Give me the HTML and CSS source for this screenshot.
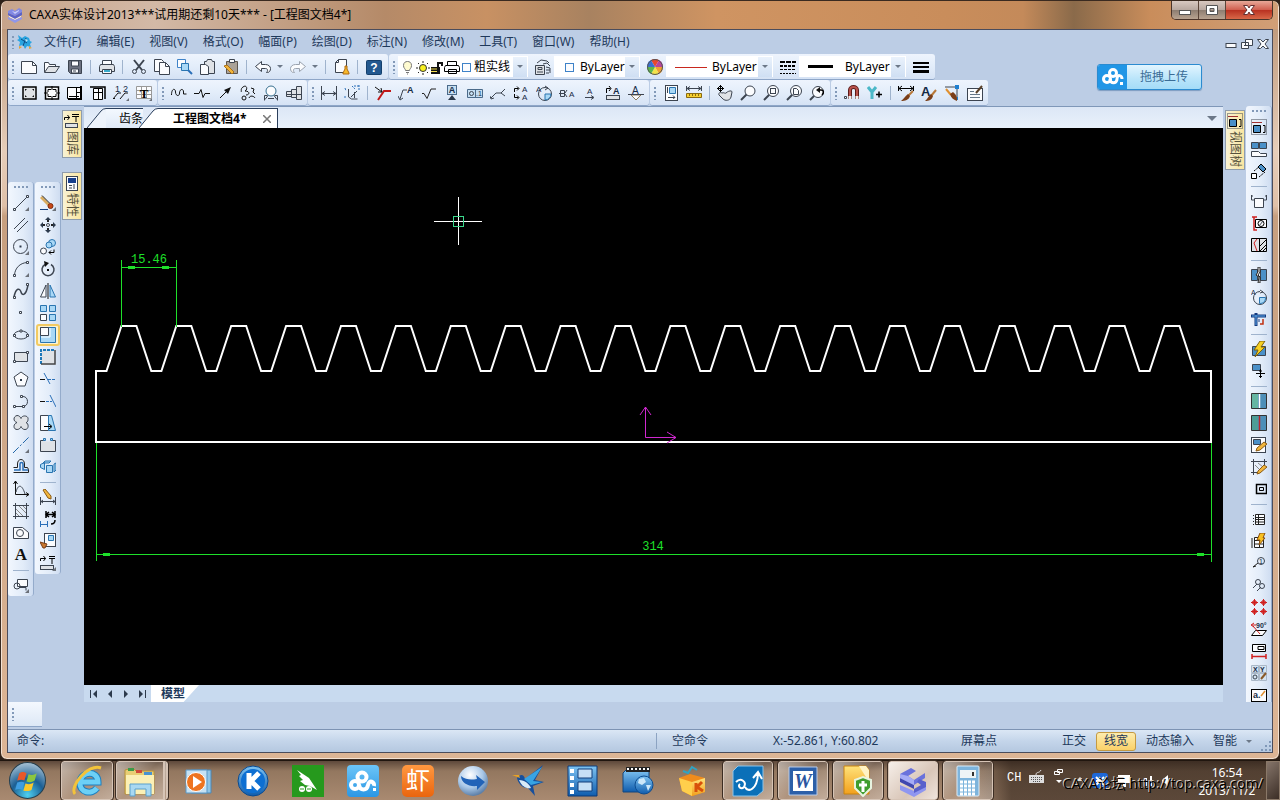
FILE: index.html
```html
<!DOCTYPE html>
<html lang="zh-CN">
<head>
    <meta charset="UTF-8">
    <meta name="viewport" content="width=device-width, initial-scale=1.0">
    <title>CAXA实体设计2013</title>
    <link rel="stylesheet" href="styles.css">
</head>
<body>

<!-- Shared gradients for the taskbar icons -->
<svg class="defs" aria-hidden="true">
    <defs>
        <linearGradient id="gBlue" x1="0" y1="0" x2="0" y2="1"><stop offset="0" stop-color="#7fc4f2"/><stop offset="1" stop-color="#0f5cad"/></linearGradient>
        <linearGradient id="gSky" x1="0" y1="0" x2="0" y2="1"><stop offset="0" stop-color="#6cc5f8"/><stop offset="1" stop-color="#2b97e4"/></linearGradient>
        <linearGradient id="gYellow" x1="0" y1="0" x2="0" y2="1"><stop offset="0" stop-color="#ffe27a"/><stop offset="1" stop-color="#f2a01c"/></linearGradient>
        <radialGradient id="gOrb" cx=".5" cy=".9" r=".9"><stop offset="0" stop-color="#4fd0f0"/><stop offset=".5" stop-color="#1b5f94"/><stop offset="1" stop-color="#a9c3d6"/></radialGradient>
        <radialGradient id="gPearl" cx=".4" cy=".3" r=".7"><stop offset="0" stop-color="#ffffff"/><stop offset=".6" stop-color="#a9c8e8"/><stop offset="1" stop-color="#5d7fa8"/></radialGradient>
    </defs>
</svg>

<div class="window">
    <header class="titlebar">
        <svg class="app-icon" viewBox="0 0 16 16"><path fill="#8289e4" d="M1 4l4-2 3 2 4-3 3 2v2L8 9 1 6z"/><path fill="#c9ccf8" d="M5 4l3 1 4-2v1L8 7z"/><path fill="#5a62c8" d="M1 6l7 3 7-4v3l-7 4-7-4z"/><path fill="#f1f1fc" d="M2 9l6 3 6-3v1l-6 3-6-3z"/><path fill="#8f96ea" d="M1 10l7 3 7-3v2l-7 4-7-4z"/></svg>
        <h1>CAXA实体设计2013***试用期还剩10天*** - [工程图文档4*]</h1>
        <div class="win-buttons">
            <button class="win-min" aria-label="最小化"><svg viewBox="0 0 14 12"><rect x="1.5" y="6.5" width="11" height="4" fill="#fff" stroke="#555"/></svg></button>
            <button class="win-max" aria-label="最大化"><svg viewBox="0 0 14 12"><path fill="#fff" stroke="#555" fill-rule="evenodd" d="M1.500 1.500h11v9h-11zM5 4.500v3h4v-3z"/></svg></button>
            <button class="win-close" aria-label="关闭"><svg viewBox="0 0 14 12"><path fill="#fff" stroke="#643030" d="M1.500 1.500h4L7 4l1.500-2.500h4L9 6l3.500 4.500h-4L7 8l-1.500 2.500h-4L5 6z"/></svg></button>
        </div>
    </header>

    <div class="client">
        <nav class="menubar">
            <span class="grip"></span>
            <svg class="menu-icon" viewBox="0 0 16 16"><path fill="#2aa4e0" d="M1 1l4 3 3-2 4 2 1 3 2 1-2 2 1 3-4-1-2 3-2-4-4 1 1-4-3-2 2-1z"/><path stroke="#0d4a82" fill="none" d="M4 5l6 4M9 4l-3 8"/><path fill="#bfe9f8" d="M8 5l3 1-2 2z"/><path fill="#e8a33a" d="M12 12l3 2-3 1zM2 12l3 1-3 2z"/></svg>
            <a href="#">文件(F)</a>
            <a href="#">编辑(E)</a>
            <a href="#">视图(V)</a>
            <a href="#">格式(O)</a>
            <a href="#">幅面(P)</a>
            <a href="#">绘图(D)</a>
            <a href="#">标注(N)</a>
            <a href="#">修改(M)</a>
            <a href="#">工具(T)</a>
            <a href="#">窗口(W)</a>
            <a href="#">帮助(H)</a>
            <div class="mdi-buttons">
                <button aria-label="最小化文档"><svg viewBox="0 0 12 12"><rect class="w" x="1" y="5.500" width="10" height="4"/></svg></button>
                <button aria-label="还原文档"><svg viewBox="0 0 12 12"><path class="w" d="M4.500 1.500h7v6h-7zM.5 4.500h7v6h-7z"/><path d="M3 7.500h2"/></svg></button>
                <button aria-label="关闭文档"><svg viewBox="0 0 12 12"><path class="w" d="M.5 1.500h3L6 4l2.500-2.500h3L8 6l3.500 4.500h-3L6 8l-2.500 2.500h-3L4 6z"/></svg></button>
            </div>
        </nav>

        <div class="toolrow">
            <div class="toolbar">
                <span class="grip"></span>
                <button title="新建"><svg viewBox="0 0 16 16"><path class="w" d="M.5 2.500h11l4 4v8H.5z"/><path d="M11.500 2.500v4h4"/></svg></button>
                <button title="打开"><svg viewBox="0 0 16 16"><path class="w" d="M.5 13V3.500h4l1 2h6v2"/><path class="g" d="M.5 13.500l4-6h11l-4 6z"/></svg></button>
                <button title="保存"><svg viewBox="0 0 16 16"><path fill="#6d7280" d="M1.500 1.500h13v13h-11l-2-2z"/><path class="w" d="M4.500 2h7v5h-7zM4.500 10h7v4h-7z"/><path d="M6 12h3"/></svg></button>
                <span class="sep"></span>
                <button title="打印"><svg viewBox="0 0 16 16"><path class="w" d="M3.500 1.500h9v4h-9z"/><path class="g" d="M1.500 5.500h13l1 2v5H.5v-5z"/><path class="w" d="M3.500 10.500h9v4h-9z"/><path stroke="#38a9c9" stroke-width="2" d="M5 12h6"/></svg></button>
                <span class="sep"></span>
                <button title="剪切"><svg viewBox="0 0 16 16"><path stroke-width="2" d="M3 1l8 10M13 1L5 11"/><circle cx="3.500" cy="12.500" r="2"/><circle cx="12.500" cy="12.500" r="2"/></svg></button>
                <button title="复制"><svg viewBox="0 0 16 16"><path class="w" d="M.5.500h7l2 2v10h-9z"/><path class="w" d="M5.500 3.500h6l4 4v8h-10z"/><path d="M11.500 3.500v4h4"/></svg></button>
                <button title="带基点复制"><svg viewBox="0 0 16 16"><path class="w blue" d="M.5.500h8v8h-8z"/><path class="b" d="M4.500 4.500h7v7h-7z"/><path class="u" stroke-width="2" d="M11 11l4 4"/></svg></button>
                <button title="粘贴"><svg viewBox="0 0 16 16"><path class="g" d="M4.500 2.500h2l1-2h4l1 2h2v12h-10z"/><path class="w" d="M.5 5.500h5l3 2v8h-8z"/></svg></button>
                <button title="选择性粘贴"><svg viewBox="0 0 16 16"><path fill="#aaa298" stroke="#5c5650" d="M3.500 2.500h11v12h-11z"/><path class="w" d="M6.500.500h5v3h-5z"/><path fill="#f2b53a" stroke="#a8701a" d="M1 7l3-1 7 7-2 2z"/></svg></button>
                <span class="sep"></span>
                <button title="撤销"><svg viewBox="0 0 16 16"><path class="w" d="M.5 7.500l6-5v3h4c3 0 5 2 5 4s-1 4-3 4h-1c2-2 1-4-1-4h-4v3z"/></svg></button>
                <button class="drop" aria-label="撤销列表"></button>
                <button title="重做"><svg viewBox="0 0 16 16" class="dim"><path class="w" d="M15.500 7.500l-6-5v3h-4c-3 0-5 2-5 4s1 4 3 4h1c-2-2-1-4 1-4h4v3z"/></svg></button>
                <button class="drop" aria-label="重做列表"></button>
                <span class="sep"></span>
                <button title="清理"><svg viewBox="0 0 16 16"><path class="w" d="M4.500.500h8v13h-11v-10z"/><path d="M4.500.500v3h-3"/><path fill="#f7b92c" stroke="#b06a10" d="M11 7h2v3l2 4v1H9v-1l2-4z"/></svg></button>
                <span class="sep"></span>
                <button title="帮助"><svg viewBox="0 0 16 16"><rect x=".5" y="1.500" width="15" height="14" rx="1" fill="#22588f" stroke="#15406c"/><text x="8" y="13" text-anchor="middle" font-size="12" font-weight="bold" fill="#fff" stroke="none">?</text></svg></button>
            </div>
            <div class="toolbar">
                <span class="grip"></span>
                <div class="combo layer">
                    <svg viewBox="0 0 74 16">
                        <path fill="#fffbd0" stroke="#777" d="M5.500 11.500c0-2-2-2-2-5s2-4 4-4 4 1 4 4-2 3-2 5zM6 13.500h3M7 15h1"/>
                        <circle cx="23" cy="9" r="3.500" fill="#f7f020" stroke="#333"/><path stroke="#222" d="M23 2v2M23 14v2M16 9h2M28 9h2M18 4l1 1M28 4l-1 1M18 14l1-1M28 14l-1-1"/>
                        <path class="k" d="M31 8h9v7h-9zM37 8V3h6v4h-2V5h-2v3z"/><path stroke="#f5df50" d="M31 10h6M31 12.500h6"/>
                        <path class="w" stroke="#000" d="M47.500 2.500h9v4h-9zM45.500 6.500h13l1 2v4h-15v-4zM48.500 10.500h8v4h-8z"/>
                        <rect class="w blue" x="62.500" y="4.500" width="8" height="8"/>
                    </svg>
                    <span>粗实线</span>
                    <button class="drop" aria-label="选择图层"></button>
                </div>
                <button title="图层设置"><svg viewBox="0 0 16 16"><path class="g" d="M.5 6.500h9v9h-9z"/><path d="M3 8.500h4v2H3zM2 13h6M2 4l4-3 6 1 2 2M8 5l4-1 3 3M11 8l4 1v5M11 11h4M11 14h3"/></svg></button>
                <div class="combo color">
                    <svg viewBox="0 0 10 16"><rect class="w blue" x=".5" y="4.500" width="8" height="8"/></svg>
                    <span>ByLayer</span>
                    <button class="drop" aria-label="选择颜色"></button>
                </div>
                <button title="颜色设置"><svg viewBox="0 0 16 16"><g stroke="none"><path fill="#e8472e" d="M8 8L4 1a8 8 0 0 1 8 0z"/><path fill="#b8459a" d="M8 8l4-7a8 8 0 0 1 4 7z"/><path fill="#f0a030" d="M8 8h8a8 8 0 0 1-4 7z"/><path fill="#f3e34a" d="M8 8l4 7a8 8 0 0 1-8 0z"/><path fill="#5bb74a" d="M8 8l-4 7a8 8 0 0 1-4-7z"/><path fill="#3a6fd0" d="M8 8H0a8 8 0 0 1 4-7z"/></g><circle cx="8" cy="8" r="7.500" stroke="#555"/></svg></button>
                <div class="combo line">
                    <svg viewBox="0 0 32 16"><path stroke="#c8281e" d="M0 8.500h32"/></svg>
                    <span>ByLayer</span>
                    <button class="drop" aria-label="选择线型"></button>
                </div>
                <button title="线型设置"><svg viewBox="0 0 16 16"><g stroke="#000"><path stroke-width="2" stroke-dasharray="5 1" d="M0 3h16"/><path stroke-width="2" stroke-dasharray="3 1" d="M0 7h16"/><path stroke-dasharray="3 1" d="M0 10.500h16"/><path stroke-dasharray="2 1" d="M0 14.500h16"/></g></svg></button>
                <div class="combo line">
                    <svg viewBox="0 0 32 16"><path stroke="#000" stroke-width="3" d="M0 7.500h25"/></svg>
                    <span>ByLayer</span>
                    <button class="drop" aria-label="选择线宽"></button>
                </div>
                <button title="线宽设置"><svg viewBox="0 0 16 16"><path stroke="#000" stroke-width="2" d="M0 4h16M0 8h16"/><path stroke="#000" stroke-width="3" d="M0 12.500h16"/></svg></button>
            </div>
        </div>

        <div class="toolrow tight">
            <div class="toolbar">
                <span class="grip"></span>
                <button title="图幅设置"><svg viewBox="0 0 16 16"><rect class="g" x="2" y="2" width="13" height="12" stroke="#000" stroke-width="1.500"/><path class="k" d="M4 4h2L4 6zM13 4v2l-2-2zM4 12v-2l2 2zM13 12h-2l2-2z"/></svg></button>
                <button title="调入图框"><svg viewBox="0 0 16 16"><rect class="w" x="1.500" y="2" width="13" height="12" stroke="#000" stroke-width="1.500"/><path stroke="#000" d="M4 7V4.500h3M9 4.500h3V7M4 9v2.500h3M9 11.500h3V9M8 1v4M8 11v4M0 8h4M12 8h4"/></svg></button>
                <button title="调入标题栏"><svg viewBox="0 0 16 16"><path stroke="#000" class="w" d="M.5 2.500h14v11H.5zM2 11.500h10M9.500 3v10M9 7.500h4"/><path stroke="#000" stroke-width="2" d="M14 1v13H1"/></svg></button>
                <button title="调入参数栏"><svg viewBox="0 0 16 16"><path stroke="#000" class="w" d="M3.500 3.500h9v11h-9zM4 7.500h8M8.500 4v10"/><path stroke="#000" stroke-width="1.500" d="M0 2h15v12"/></svg></button>
                <button title="生成序号"><svg viewBox="0 0 16 16"><text class="t" x="2" y="7" font-size="9">1</text><text class="t" x="10" y="7" font-size="9">2</text><path stroke="#111" d="M0 14l5-6h3M7 14l5-6h3M0 13.500h2"/><path class="k c" d="M16 13v3h-3z"/></svg></button>
                <button title="填写明细表"><svg viewBox="0 0 16 16"><path stroke="#999" class="w" d="M.5 1.500h15v12H.5zM.5 5.500h15M.5 9.500h15M5.500 1.500v12M10.500 1.500v12"/><text x="8" y="13" text-anchor="middle" font-size="13" font-weight="bold" fill="#000" stroke="none" font-family="Liberation Serif, serif">T</text><path class="k c" d="M16 13v3h-3z"/></svg></button>
            </div>
            <div class="toolbar">
                <span class="grip"></span>
                <button title="波浪线"><svg viewBox="0 0 16 16"><path stroke="#111" d="M.5 10c0-7 4-7 4-3s4 5 4 1 4-5 4-1v2h3"/></svg></button>
                <button title="双折线"><svg viewBox="0 0 16 16"><path stroke="#111" d="M0 8.500h5l2-4 2 8 2-4h5"/></svg></button>
                <button title="箭头"><svg viewBox="0 0 16 16"><path stroke="#111" d="M3 13l7-7"/><path class="k" d="M14 2L7 5l4 4z"/></svg></button>
                <button title="齿形"><svg viewBox="0 0 16 16"><path stroke="#111" d="M3 2c4-3 5 3 2 4 5 0 5 4 1 4M3 2C0 4 2 6 1 7M11 3l3 1-1 3 2 2M9 13c1-3 5-2 6 0"/><circle stroke="#111" cx="4" cy="13" r="2"/></svg></button>
                <button title="局部放大"><svg viewBox="0 0 16 16"><path d="M1.500 15.500v-5h3M14.500 15.500v-5h-3M2 14.500l3-4M14 14.500l-3-4M5 13.500h6"/><circle cx="8" cy="6" r="5" class="w" stroke="#38708f"/></svg></button>
                <button title="孔轴"><svg viewBox="0 0 16 16"><path class="g" d="M.5 6.500h5v5h-5zM5.500 4.500h5v8h-5zM10.500 1.500h5v13h-5z"/><path d="M0 9.500h16"/></svg></button>
            </div>
            <div class="toolbar">
                <span class="grip"></span>
                <button title="尺寸标注"><svg viewBox="0 0 16 16"><path d="M.5 1v14M15.500 1v14M1 8.500h14M4 6.500L1 8.500l3 2M12 6.500l3 2-3 2"/></svg></button>
                <button title="坐标标注"><svg viewBox="0 0 16 16"><path d="M4.500 4v8l3 2h6M7 12l6-6M10.500 7v6"/><path class="u" stroke-dasharray="2 1" d="M1 3l1 3M8 1l3 3M15 0v5M1 11v3M10 1h5"/></svg></button>
                <span class="sep"></span>
                <button title="倒角标注"><svg viewBox="0 0 16 16"><path stroke="#c01818" stroke-width="2" d="M3 15l6-9h7"/><path stroke="#111" d="M0 2l7 5M6 3l1 4-4 0"/></svg></button>
                <button title="引出说明"><svg viewBox="0 0 16 16"><path d="M2 14l3-9h4M0 11l2 4 3-2"/><text class="t" x="9" y="8" font-size="9" font-weight="bold">A</text></svg></button>
                <button title="粗糙度"><svg viewBox="0 0 16 16"><path stroke="#222" d="M1 8.500h2l3 5 4-9.500h5"/></svg></button>
                <button title="基准代号"><svg viewBox="0 0 16 16"><rect fill="#c5def2" stroke="#4a6a8a" x="3.500" y=".5" width="9" height="9"/><text class="t" x="8" y="8" text-anchor="middle" font-size="9" font-weight="bold">A</text><path class="f" d="M8 10l4 5H4z"/></svg></button>
                <button title="形位公差"><svg viewBox="0 0 16 16"><path fill="#c5def2" stroke="#4a6a8a" d="M.5 4.500h15v8H.5zM8.500 5v7"/><circle cx="4.500" cy="8.500" r="2"/><text class="t" x="9" y="11" font-size="7">.1</text></svg></button>
                <button title="焊接符号"><svg viewBox="0 0 16 16"><path d="M1 13l5-5h5l4-4M11 8l4 3M0 11l1 3 3-1"/></svg></button>
                <button title="剖切符号"><svg viewBox="0 0 16 16"><g stroke="#000"><path d="M1.500 7V3.500h4M1.500 9v3.500h4M4 1.500l2 2-2 2M4 10.500l2 2-2 2"/></g><text class="t" x="9" y="7" font-size="8">A</text><text class="t" x="9" y="15" font-size="8">A</text></svg></button>
                <button title="向视符号"><svg viewBox="0 0 16 16"><circle cx="9" cy="9" r="6.500"/><path class="b" d="M9 9h6a6 6 0 0 1-6 6z"/><text class="t" x="0" y="7" font-size="8">A</text><path d="M9 1l3 2-3 2"/></svg></button>
                <button title="中心孔标注"><svg viewBox="0 0 16 16"><path d="M1.500 5.500h4v6h-4zM0 8.500h6M6 8l2-3M6 9l2 3"/><text class="t" x="10" y="12" font-size="8">A</text></svg></button>
                <button title="旋转符号"><svg viewBox="0 0 16 16"><path d="M3 12.500h8M9 10.500l3 2-3 2"/><text class="t" x="5" y="9" font-size="8">A</text></svg></button>
                <button title="标高"><svg viewBox="0 0 16 16"><rect class="g" x="1.500" y="10.500" width="13" height="4"/><path stroke="#000" d="M1.500 8V3.500h4M4 1l2 2.500L4 6"/><text class="t" x="8" y="9" font-size="9" font-weight="bold">A</text></svg></button>
                <button title="基准目标"><svg viewBox="0 0 16 16"><path class="w" stroke="#8a7a5a" d="M3 10h10l-5 5z"/><path d="M0 9.500h16"/><text class="t" x="4" y="9" font-size="10">A</text></svg></button>
            </div>
            <div class="toolbar">
                <span class="grip"></span>
                <button title="技术要求"><svg viewBox="0 0 16 16"><rect class="w" x="2.500" y=".5" width="12" height="15"/><path class="b" d="M6.500 2.500h6v6h-6z"/><path d="M4.500 2v6M5 12.500h7M10 10.500l2 2-2 1"/></svg></button>
                <button title="测量"><svg viewBox="0 0 16 16"><path d="M.5 1v5M15.500 1v5M1 3.500h14M4 1.500L1 3.500l3 2M12 1.500l3 2-3 2"/><path fill="#f5cf30" stroke="#8a6a10" d="M.5 8.500h15v4H.5zM3.500 9v2M6.500 9v2M9.500 9v2M12.500 9v2"/></svg></button>
                <span class="sep"></span>
                <button title="动态平移"><svg viewBox="0 0 16 16"><path class="g" d="M5 8c2-1 3 1 4 0 2-2 6-3 6-1l-1 5c-1 4-6 4-8 2l-4-4c-1-2 1-3 3-2z"/><path stroke="#000" d="M3.500 0v7M0 3.500h7M2 1.500h3M2 5.500h3M1.500 2v3M5.500 2v3"/></svg></button>
                <button title="动态缩放"><svg viewBox="0 0 16 16"><path stroke-width="2" d="M1 15l6-6"/><circle class="w" cx="10" cy="6" r="5"/></svg></button>
                <button title="窗口缩放"><svg viewBox="0 0 16 16"><path stroke-width="2" d="M1 15l6-6"/><circle class="w" cx="10" cy="6" r="5.500"/><rect x="7.500" y="3.500" width="5" height="5"/></svg></button>
                <button title="显示全部"><svg viewBox="0 0 16 16"><path stroke-width="2" d="M1 15l6-6"/><circle class="w" cx="10" cy="6" r="5.500"/><path d="M7.500 3.500h3l2 2v4h-5z"/></svg></button>
                <button title="显示上一步"><svg viewBox="0 0 16 16"><path stroke-width="2" d="M1 15l5-5"/><circle class="w" cx="9" cy="7" r="5.500"/><path stroke="#000" stroke-width="1.500" d="M9 5h3c3 0 3 3 1 5"/><path class="k" d="M11 2v6L7 5z"/></svg></button>
            </div>
            <div class="toolbar">
                <span class="grip"></span>
                <button title="捕捉设置"><svg viewBox="0 0 16 16"><path stroke="#5c1c1a" stroke-width="4" d="M6 14V5c0-4 7-4 7 0v9"/><path stroke="#b8524c" stroke-width="2" d="M6 11V5c0-4 7-4 7 0v6"/><path stroke="#eee" stroke-width="3" d="M6 11v3M13 11v3"/><path class="w" d="M.5 11.500h2v2h-2z"/></svg></button>
                <button title="拾取过滤"><svg viewBox="0 0 16 16"><path stroke="#4bb8c8" stroke-width="3" d="M1 2l4 5 4-5M5 7v7"/><path stroke="#000" stroke-width="1.500" d="M9 9.500h6M12 6.500v6"/></svg></button>
                <span class="sep"></span>
                <button title="尺寸样式"><svg viewBox="0 0 16 16"><path stroke="#000" d="M.5 1v5M1 3.500h14M15.500 1v5M4 1L1 3.500 4 6M12 1l3 2.500L12 6"/><path stroke="#b87838" stroke-width="2" d="M15 6l-5 5"/><path fill="#7a3e18" stroke="none" d="M10 9l2 2c-1 4-5 5-9 5 3-2 4-5 7-7z"/></svg></button>
                <button title="文本样式"><svg viewBox="0 0 16 16"><text class="t" x="0" y="11" font-size="13" font-weight="bold">A</text><path stroke="#b87838" stroke-width="2" d="M15 5l-5 6"/><path fill="#7a3e18" stroke="none" d="M10 9l2 2c-1 4-4 5-8 5 3-2 3-5 6-7z"/></svg></button>
                <button title="点样式"><svg viewBox="0 0 16 16"><path d="M1 2h12v12"/><path fill="#1e7fd0" stroke="none" d="M11 0h4v4h-4zM11 12h3v3h-3z"/><path stroke="#e09030" stroke-width="2" d="M2 4l5 6"/><path fill="#7a3e18" stroke="none" d="M6 9l3-2c4 3 4 6 4 9-3-1-6-3-7-7z"/></svg></button>
                <button title="样式管理"><svg viewBox="0 0 16 16"><rect class="w" x=".5" y="3.500" width="15" height="12"/><path d="M3 6.500h4M3 9.500h10M3 12.500h10" stroke="#678"/><path stroke="#5a4028" stroke-width="2" d="M15 1L9 8"/></svg></button>
            </div>
        </div>

        <button class="upload">
            <span class="upload-logo"><svg viewBox="0 0 22 18"><g fill="none" stroke="#fff" stroke-width="3"><circle cx="5" cy="11" r="3.500"/><circle cx="11" cy="5" r="3.500"/><path d="M8 11c0 5 7 5 7 0s5-4 5 0"/></g><path fill="#fff" stroke="none" d="M18 14h3v3h-3z"/></svg></span>
            <span class="upload-text">拖拽上传</span>
        </button>

        <main class="workspace">
            <aside class="left-dock">
                <div class="toolcol">
                    <span class="grip"></span>
                    <button title="直线"><svg viewBox="0 0 16 16"><path d="M2 14L14 2"/><path class="w" d="M.5 13.500h2v2h-2zM13.500.5h2v2h-2z"/><path class="k c" d="M16 12v4h-4z"/></svg></button>
                    <button title="平行线"><svg viewBox="0 0 16 16"><path d="M1 12L12 1M4 15L15 4"/></svg></button>
                    <button title="圆"><svg viewBox="0 0 16 16"><circle cx="7.500" cy="7.500" r="7"/><path class="f" d="M6.500 6.500h2v2h-2z"/><path class="k c" d="M16 12v4h-4z"/></svg></button>
                    <button title="圆弧"><svg viewBox="0 0 16 16"><path d="M1.500 14C2 7 7 2 14 1.500"/><path class="w" d="M.5 13.500h2v2h-2zM13.500.5h2v2h-2z"/><path class="k c" d="M16 12v4h-4z"/></svg></button>
                    <button title="样条"><svg viewBox="0 0 16 16"><path stroke-width="1.500" d="M1 14C3 4 7 5 8 9s5 4 7-7"/><path class="w" d="M.5 13.500h2v2h-2zM13.500.5h2v2h-2z"/></svg></button>
                    <button title="点"><svg viewBox="0 0 16 16"><path class="w" d="M6.500 6.500h2v2h-2z"/></svg></button>
                    <button title="椭圆"><svg viewBox="0 0 16 16"><ellipse cx="8" cy="8" rx="7" ry="4"/><path class="w" d="M.5 7.500h2v2h-2zM13.500 7.500h2v2h-2zM7 3h2v2H7z"/></svg></button>
                    <button title="矩形"><svg viewBox="0 0 16 16"><path class="g" d="M1.500 3.500h13v9h-13z"/><path class="w" d="M.5 11.500h2v2h-2zM13.500 2.500h2v2h-2z"/></svg></button>
                    <button title="正多边形"><svg viewBox="0 0 16 16"><path class="w" d="M8 1l7 5-3 9H4L1 6z"/><path class="f" d="M7 8h2v2H7z"/></svg></button>
                    <button title="多段线"><svg viewBox="0 0 16 16"><path d="M2 13.500h8c6 0 6-10 0-10"/><path class="w" d="M.5 12.500h2v2h-2zM7.500 2.500h2v2h-2zM9.500 12.500h2v2h-2z"/></svg></button>
                    <button title="波浪云"><svg viewBox="0 0 16 16"><g class="g"><path class="g" d="M8 3.500c1-4 8-3 7 1 0 2-1 3-2 3 3 1 3 7-1 7-2 0-3-1-4-3-1 4-7 4-7 0 0-2 1-3 3-4-4-1-4-6 0-7 2 0 3 1 4 3z"/></g></svg></button>
                    <button title="中心线"><svg viewBox="0 0 16 16"><path stroke="#2367a8" stroke-dasharray="8 2 2 2" d="M0 16L16 0"/><path class="k c" d="M16 12v4h-4z"/></svg></button>
                    <button title="等距线"><svg viewBox="0 0 16 16"><path stroke="#222" d="M.5 8.500h4V5c0-6 7-6 7 0v3.500h3l1 2v3H.5"/><path class="u" stroke-width="1.500" d="M1 11h6V5c0-2 3-2 3 0v6h5"/></svg></button>
                    <button title="公式曲线"><svg viewBox="0 0 16 16"><path stroke="#111" d="M2.500 0v13.500H16M.5 3l2-3 2 3M13 11.500l3 2-3 2"/><path d="M3 11c2-8 6-8 9 2"/></svg></button>
                    <button title="剖面线"><svg viewBox="0 0 16 16"><path d="M2.500 0v16M13.500 0v16M0 2.500h16M0 13.500h16"/><path stroke="#888" d="M3 6l7 7M6 3l7 7M3 10l3 3M10 3l3 3"/></svg></button>
                    <button title="填充"><svg viewBox="0 0 16 16"><path class="w" d="M.5 2.500h9l6 5v6H.5z"/><circle cx="7" cy="8" r="3.500"/></svg></button>
                    <button title="文字"><svg viewBox="0 0 16 16"><text x="8" y="13" text-anchor="middle" font-size="17" font-weight="bold" fill="#111" stroke="none" font-family="Liberation Serif, serif">A</text></svg></button>
                    <span class="sep"></span>
                    <button title="局部放大图"><svg viewBox="0 0 16 16"><path class="w" d="M4.500 2.500h10v7h-10z"/><circle cx="4" cy="9" r="3"/><path d="M7 10.500h6v3"/><path class="k c" d="M16 12v4h-4z"/></svg></button>
                </div>
                <div class="toolcol">
                    <span class="grip"></span>
                    <button title="删除"><svg viewBox="0 0 16 16"><path stroke="#d8ac60" stroke-width="3" d="M1 2l8 8"/><path stroke="#222" d="M2 .5l8 8"/><circle cx="10.500" cy="11" r="2.500" fill="#c84818" stroke="#803010"/><path stroke="#14407a" d="M0 14.500h8"/><path class="k c" d="M16 12v4h-4z"/></svg></button>
                    <button title="平移"><svg viewBox="0 0 16 16"><path stroke="#222" stroke-width="2" d="M8 2v3M8 11v3M2 8h3M11 8h3"/><path class="f" d="M5 3l3-3 3 3zM5 13l3 3 3-3zM3 5L0 8l3 3zM13 5l3 3-3 3z"/><circle class="w" cx="8" cy="8" r="1.500"/></svg></button>
                    <button title="平移复制"><svg viewBox="0 0 16 16"><circle class="b" cx="12" cy="4" r="3.500"/><circle class="b" cx="9" cy="6" r="3"/><circle class="w" cx="3.500" cy="12" r="3"/><path stroke="#000" d="M9 13.500h5v-3M11 11.500l-2 2 2 2"/></svg></button>
                    <button title="旋转"><svg viewBox="0 0 16 16"><path stroke-width="1.500" d="M5 3.500a6 6 0 1 0 6 0"/><path class="k" d="M4 0l5 2-4 4zM7 8h2v2H7z"/></svg></button>
                    <button title="镜像"><svg viewBox="0 0 16 16"><path class="w" d="M6 2v12H.500z"/><path class="b" d="M10 2v12h5.500z"/><path stroke="#111" d="M8 0v16"/></svg></button>
                    <button title="阵列"><svg viewBox="0 0 16 16"><path class="b" d="M.5.500h6v6h-6zM9.500.500h6v6h-6zM9.500 9.500h6v6h-6z"/><path class="w" d="M.5 9.500h6v6h-6z"/></svg></button>
                    <button class="active" title="缩放"><svg viewBox="0 0 16 16"><path class="b" d="M.5.500h15v15H.500z"/><path class="w" d="M.5.500h8v8h-8z"/><path stroke="#fff" d="M10 1v9H1"/></svg></button>
                    <button title="拉伸"><svg viewBox="0 0 16 16"><path class="g" stroke="none" d="M1 1h13v13H1z"/><path stroke="#1e78b8" stroke-width="2" stroke-dasharray="3 1" d="M1 15V1h13"/><path stroke="#444" stroke-width="1.500" d="M15 1v14H1"/></svg></button>
                    <button title="裁剪"><svg viewBox="0 0 16 16"><path class="u" d="M4 2l6 11"/><path class="u" d="M8 8.500h8" stroke-dasharray="3 1"/><path stroke="#111" d="M0 8.500h5"/></svg></button>
                    <button title="延伸"><svg viewBox="0 0 16 16"><path class="u" d="M10 2l6 12"/><path stroke="#111" d="M0 8.500h5"/><path class="u" stroke-dasharray="3 1" d="M6 8.500h6"/></svg></button>
                    <button title="过渡"><svg viewBox="0 0 16 16"><path class="w" d="M.5.500h8v15h-8z"/><path class="b" d="M8.500.500h3l4 15h-7z"/><path stroke="#000" d="M4 11.500h7M9 9l3 2.500L9 14"/></svg></button>
                    <button title="打断"><svg viewBox="0 0 16 16"><path class="g" d="M.5 3.500h15v11H.5z"/><path stroke="#e4edf8" stroke-width="2" d="M5 3.500h6"/><path class="b" d="M3.500 1.500h2v2h-2zM10.500 1.500h2v2h-2z"/></svg></button>
                    <button title="分解"><svg viewBox="0 0 16 16"><path class="b" d="M6.500 6.500h6v7h-6zM.5 5.500l4-2v7l-4-2zM5 2h6l-2 2H3zM14 5l2-1v7l-2 2z"/></svg></button>
                    <span class="sep"></span>
                    <button title="标注编辑"><svg viewBox="0 0 16 16"><path d="M.5 8v8M15.500 8v8M1 12.500h14M3 11l-2 1.500L3 14M13 11l2 1.500-2 1.500"/><path fill="#f2b63c" stroke="#8a5a14" d="M3 1l2-1 6 7v3L8 9z"/></svg></button>
                    <button title="尺寸驱动"><svg viewBox="0 0 16 16"><path stroke="#000" stroke-width="1.500" d="M6 0v7M15 0v7M6 3.500h9M9 1L6 3.500 9 6M12 1l3 2.500L12 6M15 9c0 3-1 4-4 4"/><path class="u" d="M.5 10v6M7.500 10v6M1 13.500h6"/></svg></button>
                    <button title="特性匹配"><svg viewBox="0 0 16 16"><rect class="w" x="4.500" y=".5" width="11" height="13"/><path class="b" d="M8.500 2.500h5v5h-5z"/><path fill="#c87830" stroke="#7a3e18" d="M0 9l7 2-2 4H3z"/></svg></button>
                    <button title="图库"><svg viewBox="0 0 16 16"><path stroke="#000" d="M.5 6V3.500h5M3.500 1l2 2.500-2 2.500M9 1.500h6M9 3.500h6M12 3v6"/><rect class="g" x=".5" y="10.500" width="13" height="4"/><path class="k c" d="M16 12v4h-4z"/></svg></button>
                </div>
                <div class="side-tabs">
                    <button class="side-tab"><svg viewBox="0 0 16 16"><path stroke="#000" d="M.5 7V4.500h5M3.500 2l2 2.500-2 2.500M8 1.500h7M8 3.500h7M12 3v6"/><rect class="g" x="1.500" y="10.500" width="12" height="4"/></svg>图库</button>
                    <button class="side-tab"><svg viewBox="0 0 16 16"><rect class="w" x="2.500" y="1.500" width="11" height="14"/><path fill="#173f8c" stroke="none" d="M4 3h8v5H4z"/><path d="M5 10.500h3M10 9v5M5 13h3"/></svg>特性</button>
                </div>
            </aside>

            <section class="document">
                <div class="doc-tabs">
                    <button class="doc-tab"><svg viewBox="0 0 19 20" class="slope"><path fill="#edf3fb" stroke="none" d="M0 20L14 3l5-3v20z"/><path stroke="#2b3f5c" d="M0 20L14 3q2-2.500 5-2.500"/></svg><span>齿条</span></button>
                    <button class="doc-tab current"><svg viewBox="0 0 19 20" class="slope"><path fill="#fff" stroke="none" d="M0 20L14 3l5-3v20z"/><path stroke="#2b3f5c" d="M0 20L14 3q2-2.500 5-2.500"/></svg><span>工程图文档4*<svg viewBox="0 0 8 8" class="tab-close"><path stroke-width="1.500" stroke="#777" d="M0 0l8 8M8 0L0 8"/></svg></span></button>
                    <button class="tab-list" aria-label="文档列表"></button>
                </div>

                <svg class="drawing" viewBox="84 128 1139 557">
                    <!-- rack outline, 20 teeth -->
                    <path class="outline" d="M96 371h10.500l14.900-45h15l14.900 45h10.100l14.900-45h15l14.900 45h10.100l14.900-45h15l14.900 45h10.100l14.900-45h15l14.900 45h10.100l14.900-45h15l14.900 45h10.100l14.900-45h15l14.900 45h10.100l14.900-45h15l14.900 45h10.100l14.900-45h15l14.900 45h10.100l14.900-45h15l14.900 45h10.100l14.900-45h15l14.900 45h10.100l14.900-45h15l14.900 45h10.100l14.900-45h15l14.900 45h10.100l14.900-45h15l14.900 45h10.100l14.900-45h15l14.900 45h10.100l14.900-45h15l14.900 45h10.100l14.900-45h15l14.900 45h10.100l14.900-45h15l14.900 45h10.100l14.900-45h15l14.900 45h10.100l14.900-45h15l14.900 45h10.100l14.900-45h15l14.900 45H1211V442H96z"/>
                    <!-- dimensions -->
                    <g class="dimension">
                        <path d="M121.500 260v67M176.500 260v67M122 267.500h55M96.500 443v118M1211.500 443v119M97 554.500h1114"/>
                        <path class="tip" d="M128 266h7v3h-7zM162 266h7v3h-7zM103 553h7v3h-7zM1197 553h7v3h-7z"/>
                        <text x="149" y="263">15.46</text>
                        <text x="653" y="550">314</text>
                    </g>
                    <!-- origin -->
                    <path class="origin" d="M645.500 407v30.500H676M640 415l5.500-8 5.500 8M667 432l9 5.500-9 5.500"/>
                    <!-- cursor -->
                    <path class="cursor" d="M434 221.500h48M458.500 197v48"/>
                    <rect class="pickbox" x="453.500" y="216.500" width="10" height="10"/>
                </svg>

                <div class="sheet-tabs">
                    <button aria-label="第一页"><svg viewBox="0 0 8 8"><path class="f" d="M7 0v8L3 4zM0 0h1v8H0z"/></svg></button>
                    <button aria-label="上一页"><svg viewBox="0 0 8 8"><path class="f" d="M6 0v8L2 4z"/></svg></button>
                    <button aria-label="下一页"><svg viewBox="0 0 8 8"><path class="f" d="M2 0v8l4-4z"/></svg></button>
                    <button aria-label="最后一页"><svg viewBox="0 0 8 8"><path class="f" d="M1 0v8l4-4zM7 0h1v8H7z"/></svg></button>
                    <button class="sheet">模型</button>
                </div>
            </section>

            <aside class="right-dock">
                <div class="side-tabs">
                    <button class="side-tab"><svg viewBox="0 0 16 16"><rect x=".5" y=".5" width="15" height="15" stroke-dasharray="1 1"/><path stroke="#a03030" d="M1 3.500h10"/><path fill="#4a90c8" d="M2.500 6.500h7v7h-7z" stroke="#000"/><path stroke="#000" d="M12 6.500h2v7h-2"/></svg>视图树</button>
                </div>
                <div class="toolcol">
                    <span class="grip"></span>
                    <button title="标准视图"><svg viewBox="0 0 16 16"><rect x=".5" y=".5" width="15" height="15" stroke-dasharray="1 1"/><path stroke="#a03030" d="M1 3.500h10"/><path fill="#4a90c8" d="M2.500 6.500h7v7h-7z" stroke="#000"/><path stroke="#000" d="M12 6.500h2v7h-2"/></svg></button>
                    <button title="投影视图"><svg viewBox="0 0 16 16"><path fill="#4a90c8" d="M.5 1.500h7v6h-7zM8.500 1.500h7v6h-7z"/><path class="w" d="M.5 10.500h7l2 2h6v3H.5z"/></svg></button>
                    <button title="向视图"><svg viewBox="0 0 16 16"><path class="w" stroke="#000" d="M.5 10.500h5v5h-5z"/><path stroke="#000" stroke-dasharray="2 1" d="M3 8l6-5M8 14l6-5"/><path fill="#4a90c8" stroke="#000" d="M10 1l5 5-3 3-5-5z"/></svg></button>
                    <span class="sep"></span>
                    <button title="剖视图"><svg viewBox="0 0 16 16"><path d="M.5 2v5h15V2M0 3h2M14 3h2"/><path class="w" d="M3.500 5.500h9v9h-9z"/></svg></button>
                    <button title="剖面图"><svg viewBox="0 0 16 16"><path class="w" stroke="#000" d="M4.500 4.500h11v8h-11z"/><circle cx="10" cy="8.500" r="3" stroke="#000"/><path d="M8 11l4-5"/><path class="r" stroke-width="1.500" d="M6 2H3v13h3M1 2h2"/></svg></button>
                    <button title="局部剖"><svg viewBox="0 0 16 16"><path class="g" stroke="#000" d="M.5 1.500h15v13H.5z"/><path class="r" d="M6 2L3 6l3 8"/><path stroke="#000" d="M8.500 2v12M9 9l6-6M9 14l6-6M12 14l3-3"/></svg></button>
                    <span class="sep"></span>
                    <button title="截断视图"><svg viewBox="0 0 16 16"><path fill="#4a90c8" d="M.5 2.500h6v11h-6zM9.500 2.500h6v11h-6z"/><path stroke="#222" fill="#fff" d="M7 0v5l-2 3 3 2-1 6h2V10L7 8l2-3V0z"/></svg></button>
                    <button title="局部放大"><svg viewBox="0 0 16 16"><circle cx="9" cy="9" r="6.500"/><path class="b" d="M8.500 8.500h6c0 4-2 6-6 6z"/><text class="t" x="0" y="6" font-size="7">A</text><path class="w" d="M9 1l3 2-3 1"/></svg></button>
                    <button title="裁剪视图"><svg viewBox="0 0 16 16"><path stroke="#143a80" stroke-width="3" d="M0 5h15M5 2v13"/><path stroke="#5aa6e8" d="M1 5h13M5 4v10"/><path stroke="#c03010" stroke-width="1.500" d="M9 13h3V8"/><path stroke="#143a80" d="M8 8v3"/></svg></button>
                    <span class="sep"></span>
                    <button title="视图更新"><svg viewBox="0 0 16 16"><path fill="#4a90c8" d="M1.500 5.500h13v9h-13z"/><path fill="#f8d020" stroke="#7a6010" d="M9 0h5l-4 6h4L4 16l3-7H3z"/></svg></button>
                    <button title="视图移动"><svg viewBox="0 0 16 16"><path fill="#4a90c8" d="M1.500 1.500h8v6h-8z"/><path stroke="#000" d="M9.500 6v9M5 10.500h9M8 8h3M8 13.500h3"/></svg></button>
                    <span class="sep"></span>
                    <button title="隐藏图线"><svg viewBox="0 0 16 16"><path fill="#4d8fb8" stroke="#333" d="M.5.500h15v15H.500z"/><path fill="#65b6a2" stroke="none" d="M1 1h6v14H1z"/><path stroke="#fff" stroke-width="1.500" d="M8.500 1v14"/></svg></button>
                    <button title="取消隐藏"><svg viewBox="0 0 16 16"><path fill="#4d8fb8" stroke="#333" d="M.5.500h15v15H.500z"/><path fill="#4c9d96" stroke="none" d="M1 1h6v14H1z"/><path stroke="#b82828" stroke-width="1.500" d="M8.500 1v14"/></svg></button>
                    <button title="视图属性"><svg viewBox="0 0 16 16"><rect class="w" x=".5" y=".5" width="14" height="15"/><path fill="#4a90c8" d="M2.500 2.500h7v5h-7z"/><path fill="#f2b63c" stroke="#8a5a14" d="M5 14l1-3 7-6 3 2-7 6z"/></svg></button>
                    <button title="剖面线编辑"><svg viewBox="0 0 16 16"><path d="M2.500 0v16M0 2.500h16M13.500 0v6M0 13.500h8"/><path stroke="#888" d="M4 6l5 5M7 4l5 4"/><path fill="#f2b63c" stroke="#8a5a14" d="M6 15l1-3 6-6 3 2-7 6z"/></svg></button>
                    <button title="图框"><svg viewBox="0 0 16 16"><path stroke="#000" stroke-width="1.500" d="M5.500 3.500h10v9h-10z"/><path stroke="#000" d="M8.500 6.500h4v3h-4z"/></svg></button>
                    <span class="sep"></span>
                    <button title="明细表"><svg viewBox="0 0 16 16"><path class="w" stroke="#222" d="M4.500 3.500h9v10h-9zM5 6.500h9M5 8.500h9M5 11h9M7.500 4v9"/><path stroke="#222" stroke-dasharray="1 2" d="M2.500 4v10"/></svg></button>
                    <button title="更新明细表"><svg viewBox="0 0 16 16"><path class="w" stroke="#222" d="M3.500 4.500h9v10h-9zM4 7.500h9M4 11h9M8.500 4v10M1 5v10"/><path fill="#f8c020" stroke="#8a5010" d="M9 0h5l-2 5h2L8 12l1-5H6z"/></svg></button>
                    <button title="零件序号"><svg viewBox="0 0 16 16"><circle cx="10" cy="6" r="3.500"/><text class="t" x="8" y="9" font-size="7">1</text><path stroke="#222" d="M2 12l5-4M2 12l3-1"/></svg></button>
                    <button title="自动序号"><svg viewBox="0 0 16 16"><circle cx="7" cy="5" r="2.500"/><circle cx="11" cy="9" r="2.500"/><path d="M2 11l4-4M6 14l4-4"/></svg></button>
                    <button title="孔标注"><svg viewBox="0 0 16 16"><g class="r" fill="#d86868"><circle cx="3.500" cy="3.500" r="2"/><circle cx="12.500" cy="3.500" r="2"/><circle cx="3.500" cy="12.500" r="2"/><circle cx="12.500" cy="12.500" r="2"/><path d="M0 3.500h7M3.500 0v7M9 3.500h7M12.500 0v7M0 12.500h7M3.500 9v7M9 12.500h7M12.500 9v7"/></g></svg></button>
                    <button title="折弯标注"><svg viewBox="0 0 16 16"><path class="w" stroke="#000" d="M.5 14.500l4-5h11l-4 5z"/><path class="r" d="M1 4h4M3 2L0 4l3 2M2 5l7 8"/><text class="t" x="5" y="7" font-size="7" font-weight="bold">90°</text></svg></button>
                    <button title="展开标注"><svg viewBox="0 0 16 16"><path class="w" stroke="#000" d="M1.500 1.500h13v7h-13zM7 3.500h6v3H7z"/><path class="r" stroke-width="1.500" d="M1 11v5M15 11v5M1 13.500h14"/></svg></button>
                    <button title="坐标编辑"><svg viewBox="0 0 16 16"><path fill="#d5e4f2" stroke="#aab8c8" d="M.5.500h7v7h-7zM8.500.500h7v7h-7zM.5 8.500h7v7h-7zM8.500 8.500h7v7h-7z"/><text class="t" x="2" y="7" font-size="7" font-weight="bold">X</text><text class="t" x="9" y="7" font-size="7" font-weight="bold">Y</text><circle cx="4" cy="12" r="2"/><path stroke="#8a5a28" stroke-width="2" d="M15 8l-5 6"/></svg></button>
                    <button title="文字编辑"><svg viewBox="0 0 16 16"><rect class="w" stroke="#000" x=".5" y="2.500" width="15" height="12"/><text class="t" x="2" y="11" font-size="9" font-weight="bold">a.</text><path stroke="#e09030" stroke-width="1.500" d="M14 4l-4 5"/></svg></button>
                </div>
            </aside>
        </main>

        <div class="command-dock"><div class="command-bar"><span class="grip"></span></div></div>

        <footer class="statusbar">
            <span class="command">命令:</span>
            <span class="prompt">空命令</span>
            <span class="coords">X:-52.861, Y:60.802</span>
            <span class="snap">屏幕点</span>
            <button>正交</button>
            <button class="on">线宽</button>
            <button>动态输入</button>
            <button class="smart">智能<span class="caret"></span></button>
            <svg class="resize" viewBox="0 0 12 12"><path d="M9 1h2v2H9zM9 5h2v2H9zM5 5h2v2H5zM9 9h2v2H9zM5 9h2v2H5zM1 9h2v2H1z"/></svg>
        </footer>
    </div>
</div>

<div class="taskbar">
    <button class="start" aria-label="开始"><svg viewBox="0 0 36 36"><circle cx="18" cy="18" r="17.500" fill="url(#gOrb)" stroke="#27404f"/><path fill="#e8582a" d="M10 11c3-2 5-1 7 0l-2 7c-2-1-4-1-7 0z"/><path fill="#8cc63f" d="M19 12c3 1 5 1 8-1l-2 7c-3 2-5 2-8 1z"/><path fill="#3f9de0" d="M8 20c3-1 5-1 7 0l-2 7c-2-1-4-1-7 0z"/><path fill="#fbc82a" d="M16 21c3 1 5 1 8-1l-2 7c-3 2-5 1-8 1z"/></svg></button>

    <div class="tasks">
        <button class="task open wide" title="Internet Explorer"><svg viewBox="0 0 32 32"><path fill="none" stroke="#1c7fc0" stroke-width="7" d="M26 23c-5 7-18 5-17-6S27 5 27 17H10"/><path fill="none" stroke="#6cd0f6" stroke-width="5" d="M26 23c-5 7-18 5-17-6S27 5 27 17H10"/><path fill="none" stroke="#f3c33a" stroke-width="3" d="M4 29C-2 22 17-2 30 3"/></svg></button>
        <button class="task open wide stack" title="资源管理器"><svg viewBox="0 0 32 32"><path fill="#e9cf74" stroke="#b7923a" d="M1 5l8-2 3 3h18v23H1z"/><path fill="#fbf0b6" d="M2 10h28v19H2z"/><path fill="#3c9a48" d="M4 3h6v3H4z"/><path fill="#d04a3a" d="M12 5h6v3h-6z"/><path fill="#4892d0" d="M20 7h8v3h-8z"/><path fill="#a8d8f2" stroke="#5aa0cc" d="M6 31V19h21v12h-5v-7H11v7z"/></svg></button>
        <button class="task" title="媒体播放器"><svg viewBox="0 0 32 32"><path fill="#8fc4e6" stroke="#4a87b5" d="M9 5h20v23H9z"/><path fill="#c6e2f4" stroke="#5a97c5" d="M4 5h21v23H4z"/><circle cx="14" cy="17" r="9.500" fill="#ee7420" stroke="#fff"/><path fill="#fff" d="M11 11l9 6-9 6z"/></svg></button>
        <button class="task" title="酷狗音乐"><svg viewBox="0 0 32 32"><circle cx="16" cy="16" r="15" fill="url(#gBlue)" stroke="#0a4a90"/><circle cx="16" cy="16" r="12" fill="#0d6fd2"/><path fill="none" stroke="#fff" stroke-width="5" d="M12 8v16M22 8l-8 8 8 8"/></svg></button>
        <button class="task" title="游戏"><svg viewBox="0 0 32 32"><path fill="#26991d" d="M0 0h32v32H0z"/><path fill="#fff" d="M5 5l12 8 8 12-7-4-5-1-5-4 3-1-4-4 2-1z"/><circle cx="10" cy="24" r="3" fill="#fff"/><circle cx="17" cy="24" r="3" fill="#fff"/><path stroke="#26991d" d="M8 24h4M15 24h4"/></svg></button>
        <button class="task" title="百度云"><svg viewBox="0 0 32 32"><rect width="32" height="32" rx="4" fill="url(#gSky)"/><g fill="none" stroke="#fff" stroke-width="4"><circle cx="8" cy="20" r="4"/><circle cx="15" cy="12" r="4.500"/><path d="M12 20c1 6 8 6 9 0s7-3 6 1"/></g><path fill="#fff" d="M26 23h3v3h-3z"/></svg></button>
        <button class="task xiami" title="虾米音乐"><span>虾</span></button>
        <button class="task" title="迅雷看看"><svg viewBox="0 0 32 32"><circle cx="16" cy="16" r="15" fill="url(#gPearl)"/><path fill="#2163b8" d="M4 11c5 4 10 4 16 3l-1-4 9 7-8 8v-4c-8 1-16-3-16-10z"/></svg></button>
        <button class="task" title="迅雷"><svg viewBox="0 0 32 32"><path fill="#174f9c" d="M5 13c4-5 7-3 8 1L31 0l-8 15 9 2-11 4 2 10-7-8c-6 0-10-5-11-10z"/><path fill="#38a4e4" d="M12 14L30 2l-9 14 9 1-11 3z"/><path fill="#d9ecf8" d="M7 15c3 7 8 9 12 8-2-4-6-8-12-8z"/><path fill="#e8a224" d="M0 10h7l1 3z"/></svg></button>
        <button class="task" title="影音"><svg viewBox="0 0 32 32"><path fill="url(#gBlue)" stroke="#0c3a78" d="M1 1h29v30H1z"/><path fill="#fff" d="M3 4h4v4H3zM3 11h4v4H3zM3 18h4v4H3zM3 25h4v4H3z"/><path fill="#c6e0f6" stroke="#123f7a" d="M11 4h14v9H11zM11 17h14v9H11z"/></svg></button>
        <button class="task" title="网络相册"><svg viewBox="0 0 32 32"><path fill="url(#gBlue)" stroke="#12477f" d="M1 8l3-3h23v22H1z"/><path fill="#222" d="M4 2h24v5H4z"/><path stroke="#fff" stroke-width="2" stroke-dasharray="2 2" d="M5 4h22"/><circle cx="22" cy="20" r="9" fill="url(#gBlue)" stroke="#0c4c90"/><path fill="#cde8fa" d="M17 14l5-1 2 4-4 3-4-2zM24 20l5 0-3 6z"/></svg></button>
        <button class="task" title="酷狗盒子"><svg viewBox="0 0 32 32"><path fill="#f08c1c" d="M2 13l11-4 15 4v14l-13 4-10-5z"/><path fill="#ffcf4c" d="M2 13l13 4v14L5 26z"/><path fill="url(#gYellow)" d="M15 17l13-4v14l-13 4z"/><path fill="none" stroke="#d8500a" stroke-width="3" d="M19 18v9M25 17l-5 5 6 4"/><path fill="none" stroke="#2fa3c4" stroke-width="2" d="M6 6l5 2 4-6 5 3"/></svg></button>
        <button class="task open" title="同步"><svg viewBox="0 0 32 32"><path fill="#0b70b8" stroke="#8cc4ea" d="M6 1h25v25l-6 5H1V6z"/><path fill="none" stroke="#fff" stroke-width="2" d="M4 17c5-5 11 0 8 5-3 3-7-1-4-3M13 22c3 6 12 3 13-13M21 13l5-6 4 7"/></svg></button>
        <button class="task open" title="Word"><svg viewBox="0 0 32 32"><path fill="#2c5fa8" stroke="#b9cce8" d="M2 2h28v28H2z"/><path fill="#fff" d="M6 6h20v20H6z"/><text x="16" y="23" text-anchor="middle" font-family="Liberation Serif, serif" font-size="20" font-weight="bold" font-style="italic" fill="#2a55a0">W</text></svg></button>
        <button class="task open" title="安全文档"><svg viewBox="0 0 32 32"><path fill="url(#gYellow)" stroke="#c98310" d="M2 1h22l3 4v24H2z"/><path fill="#fff3c4" d="M17 1h7l3 4v12z"/><path fill="#3f9d2e" stroke="#e8f4e0" stroke-width="2" d="M13 15l8-3 8 3v8l-8 8-8-8z"/><path stroke="#fff" stroke-width="3" d="M21 16v11M17 20h8"/></svg></button>
        <button class="task open focus" title="CAXA"><svg viewBox="0 0 32 32"><path fill="#6a72dc" d="M3 9l11-6 5 3-8 5 6 4 11-7v5l-11 7L3 13z"/><path fill="#4048b0" d="M3 13l14 7v4L3 17z"/><path fill="#a6acf6" d="M3 9l8 2 6 4v5L3 13z"/><path fill="#8f96f0" d="M3 20l14 6 12-6v5l-12 7-14-7z"/><path fill="#5860cc" d="M22 14l7 3v5l-12 6v-4l7-4-4-3z"/></svg></button>
        <button class="task open" title="计算器"><svg viewBox="0 0 32 32"><rect x="5" y="1" width="22" height="30" rx="1" fill="#7db4dc" stroke="#dcecf8"/><path fill="#eef4f6" d="M8 5h16v8H8z"/><path fill="#333" d="M20 7h2v4h-2z"/><path stroke="#fff" stroke-width="3" stroke-dasharray="3 1" d="M8 17h16M8 21h16M8 25h16M8 29h16"/></svg></button>
    </div>

    <div class="tray">
        <span class="lang">CH</span>
        <svg class="keyboard" viewBox="0 0 16 16"><path fill="#ddd" d="M0 6h15v8H0z"/><path stroke="#555" stroke-dasharray="1 1" d="M2 8.500h11M2 10.500h11M4 12.500h7"/><path stroke="#ddd" fill="none" d="M7 6c0-4 3-1 5-5"/></svg>
        <svg class="lang-options" viewBox="0 0 10 16"><path stroke="#fff" fill="none" d="M3.500 1.500h5v3h-5zM.5 3.500h5v3h-5z"/><path fill="#fff" d="M2 12h6l-3 3z"/></svg>
        <svg class="notify" viewBox="0 0 100 16"><path fill="#ddd" d="M4 8l4-4 4 4z"/><rect x="20" y="0" width="16" height="15" rx="3" fill="#1d68d8"/><path stroke="#fff" stroke-width="2" fill="none" d="M24 4l8 8M32 4l-8 8M24 8h8"/><path fill="#fff" d="M46 2h12v8h-4v4h-3v-4h-5zM72 5h3v8h-3zM78 3h2v10h-2zM90 7l6-5v12l-3-4h-3z"/></svg>
        <div class="clock"><span>16:54</span><span>2013/11/2</span></div>
        <div class="watermark">CAXA论坛 http://top.caxa.com/</div>
    </div>
    <button class="show-desktop" aria-label="显示桌面"></button>
</div>

</body>
</html>
```
FILE: styles.css
```css
* {
    box-sizing: border-box;
}
body {
    margin: 0;
    min-height: 100vh;
    display: flex;
    flex-direction: column;
    background-color: #2d2119;
    color: #1e395b;
    font-family: "Noto Sans", "Noto Sans CJK SC", sans-serif;
    font-size: 12px;
    line-height: 16px;
}
button {
    margin: 0;
    padding: 0;
    border: none;
    background: none;
    color: inherit;
    font: inherit;
    display: flex;
    align-items: center;
    justify-content: center;
    flex: none;
}
svg {
    flex: none;
}
.defs {
    position: absolute;
    width: 0;
    height: 0;
}

/* window frame */
.window {
    flex: 1;
    display: flex;
    flex-direction: column;
    padding: 0 6px 6px;
    border: 1px solid #3a2a20;
    border-radius: 7px;
    background: linear-gradient(to bottom, #b89070 0, #e6cdb9 150px, #dfc0a8 205px, #c79f7f 215px, #ddb595 100%);
    box-shadow: inset 0 0 0 1px #f3e2d4;
}
.titlebar {
    display: flex;
    align-items: center;
    height: 28px;
    margin: 0 -5px;
    padding: 0 5px;
    border-radius: 6px 6px 0 0;
    background: linear-gradient(to right, #c7a48b 0, #d3b9a6 12%, #b58a68 30%, #c89163 38%, #a88260 46%, #cf9462 56%, #c98d5b 74%, #c48a5a 80%, #8a6a4a 84%, #c98d5b 90%, #d19f77 100%);
}
.titlebar h1 {
    flex: 1;
    margin: 0 0 0 6px;
    color: #000;
    font-size: 12px;
    font-weight: normal;
}
.app-icon {
    width: 16px;
    height: 16px;
}
.win-buttons {
    display: flex;
    align-self: flex-start;
    height: 19px;
    border: 1px solid #4a342a;
    border-top: none;
    border-radius: 0 0 5px 5px;
    overflow: hidden;
}
.win-buttons button {
    width: 27px;
    border-right: 1px solid #5a4438;
    background: linear-gradient(#d8c8c0 0, #b8a8a0 48%, #8c7c70 50%, #b8a390 100%);
}
.win-buttons svg {
    width: 14px;
    height: 12px;
}
.win-buttons .win-close {
    width: 46px;
    border-right: none;
    background: linear-gradient(#e8a898 0, #d06050 48%, #b83020 50%, #d86848 100%);
}
.client {
    position: relative;
    flex: 1;
    display: flex;
    flex-direction: column;
    border: 1px solid #4a4c5c;
    background-color: #bccde5;
}

/* icons share one drawing style */
.client svg {
    fill: none;
    stroke: #3c4450;
    font-family: "Liberation Sans", sans-serif;
}
.client svg .w { fill: #fbfcfe; }
.client svg .g { fill: #dfe2e6; }
.client svg .b { fill: #a9d8f6; stroke: #2a75b0; }
.client svg .k { fill: #111; stroke: none; }
.client svg .c { fill: #6b7078; }
.client svg .f { fill: #2c3a4c; stroke: none; }
.client svg .r { stroke: #d02020; }
.client svg .u { stroke: #2a6fb8; }
.client svg .t { fill: #152a45; stroke: none; }
.client svg .blue { stroke: #3e82c8; }
.client svg.dim { stroke: #9aa2ae; }

/* menu bar */
.menubar {
    display: flex;
    align-items: center;
    gap: 15px;
    height: 24px;
}
.menubar .grip {
    margin-right: -15px;
}
.menu-icon {
    width: 16px;
    height: 16px;
    margin-right: -4px;
}
.menubar .menu-icon {
    stroke: none;
}
.menubar a {
    color: #1e395b;
    text-decoration: none;
    white-space: nowrap;
}
.mdi-buttons {
    display: flex;
    gap: 4px;
    margin: 4px 3px 0 auto;
}
.mdi-buttons svg {
    width: 12px;
    height: 12px;
}

/* toolbars */
.grip {
    flex: none;
    width: 9px;
    height: 14px;
    background: radial-gradient(circle at 5px 2px, #8299b8 1px, transparent 1px) 0 0 / 9px 4px;
}
.sep {
    flex: none;
    width: 9px;
    height: 14px;
    background: linear-gradient(#9fb3cd, #9fb3cd) center / 1px 100% no-repeat;
}
.toolrow {
    display: flex;
    gap: 1px;
    height: 26px;
}
.toolbar {
    display: flex;
    align-items: center;
    height: 26px;
    padding-right: 3px;
    border-bottom: 1px solid #8ea6c8;
    border-radius: 3px;
    background: linear-gradient(#eef4fd 0, #e3edfa 50%, #d5e2f4 100%);
}
.tight .toolbar {
    padding-right: 2px;
}
.tight .sep {
    width: 8px;
}
.toolbar > button {
    width: 23px;
    height: 22px;
}
.toolbar > button svg,
.toolcol button svg {
    width: 16px;
    height: 16px;
}
.toolbar .drop {
    width: 12px;
}
.drop::after,
.caret,
.tab-list::after {
    content: "";
    border: 3px solid transparent;
    border-top: 3px solid #6c7888;
    border-bottom: none;
}
.combo {
    display: flex;
    align-items: center;
    height: 21px;
    margin-right: 3px;
    background-color: #fff;
    color: #000;
    white-space: nowrap;
}
.combo svg {
    height: 16px;
}
.combo span {
    flex: 1;
    overflow: hidden;
}
.combo .drop {
    height: 20px;
    width: 14px;
    margin-right: 1px;
    background: linear-gradient(#eaf2fc, #cfdff3);
}
.layer { width: 130px; padding-left: 2px; }
.layer svg { width: 74px; }
.color { width: 86px; padding-left: 11px; }
.color svg { width: 10px; margin-right: 5px; }
.line { width: 107px; padding-left: 9px; }
.line svg { width: 32px; margin-right: 5px; }

.upload {
    position: absolute;
    top: 34px;
    right: 70px;
    height: 26px;
    border: 1px solid #2b8bd0;
    border-radius: 3px;
    background: linear-gradient(#e2f5ff 0, #b8e4fa 60%, #a4dcf8 100%);
    box-shadow: 0 1px 1px #7d9cc0;
    overflow: hidden;
}
.upload-logo {
    display: flex;
    align-items: center;
    justify-content: center;
    width: 29px;
    height: 24px;
    background-color: #2196e6;
}
.upload-logo svg {
    width: 22px;
    height: 18px;
}
.upload-text {
    width: 74px;
    color: #3a6c96;
}

/* docks */
.workspace {
    flex: 1 1 0;
    display: flex;
    min-height: 500px;
    overflow: hidden;
}
.left-dock {
    display: flex;
    align-items: flex-start;
    gap: 1px;
    width: 76px;
}
.left-dock .toolcol {
    margin-top: 76px;
}
.right-dock {
    display: flex;
    align-items: flex-start;
    gap: 1px;
    padding-left: 2px;
}
.toolcol {
    display: flex;
    flex-direction: column;
    align-items: center;
    width: 26px;
    border-right: 1px solid #94abcb;
    border-radius: 3px;
    background: linear-gradient(to right, #f2f7fe 0, #e2ecf9 60%, #cfddf1 100%);
}
.toolcol button {
    width: 24px;
    height: 22px;
}
.toolcol .grip {
    width: 16px;
    height: 10px;
    background: radial-gradient(circle at 2px 5px, #8299b8 1px, transparent 1px) 0 0 / 4px 10px;
}
.toolcol .sep {
    width: 16px;
    height: 8px;
    background: linear-gradient(#9fb3cd, #9fb3cd) center / 100% 1px no-repeat;
}
.toolcol .active {
    border: 2px solid #f2ca62;
    border-radius: 3px;
    background-color: #fdf3cf;
}
.side-tabs {
    display: flex;
    flex-direction: column;
    gap: 14px;
    padding-top: 4px;
}
.side-tab {
    gap: 2px;
    width: 20px;
    padding: 2px 0;
    border: 1px solid #8f9cab;
    background: linear-gradient(to right, #f8f2d4 0, #fbe6a0 100%);
    color: #55513c;
    line-height: 18px;
    writing-mode: vertical-rl;
    text-orientation: sideways;
}
.side-tab svg {
    width: 16px;
    height: 16px;
}

/* document */
.document {
    flex: 1;
    display: flex;
    flex-direction: column;
    min-width: 0;
}
.doc-tabs {
    display: flex;
    height: 22px;
    padding: 1px 0 0 3px;
    border-top: 1px solid #7f97b8;
    background: linear-gradient(#dce7f6, #e9f1fb);
    color: #000;
}
.doc-tab {
    height: 20px;
}
.doc-tab .slope {
    width: 19px;
    height: 20px;
}
.doc-tab > span {
    display: flex;
    align-items: center;
    height: 20px;
    padding: 0 0 0 13px;
    border-top: 1px solid #2b3f5c;
    background: linear-gradient(#f3f8fe, #e0eaf7);
}
.doc-tab.current {
    margin-left: -4px;
    font-weight: bold;
}
.doc-tab.current > span {
    padding: 0 6px 0 15px;
    border-right: 1px solid #2b3f5c;
    background: #fff;
}
.doc-tab .tab-close {
    width: 8px;
    height: 8px;
    margin-left: 17px;
}
.tab-list {
    width: 22px;
    margin-left: auto;
}
.tab-list::after {
    border-width: 5px;
    border-top: 5px solid #6c7888;
}
.drawing {
    flex: 1 1 0;
    width: 100%;
    min-height: 0;
    background-color: #000;
}
.drawing .outline {
    stroke: #fff;
    stroke-width: 2px;
}
.drawing .dimension {
    stroke: #1ee02a;
}
.drawing .tip {
    fill: #1ee02a;
    stroke: none;
}
.drawing text {
    fill: #1ee02a;
    stroke: none;
    text-anchor: middle;
    font-family: "Liberation Mono", monospace;
    font-size: 12px;
}
.drawing .origin {
    stroke: #d028d0;
}
.drawing .cursor {
    stroke: #fff;
}
.drawing .pickbox {
    stroke: #3ad88c;
}
.sheet-tabs {
    display: flex;
    height: 17px;
    padding-left: 2px;
    background-color: #c8daef;
}
.sheet-tabs button {
    width: 16px;
}
.sheet-tabs svg {
    width: 8px;
    height: 8px;
}
.sheet-tabs .sheet {
    width: 48px;
    margin-left: 1px;
    padding-right: 4px;
    background-color: #fff;
    clip-path: polygon(0 0, 100% 0, 68% 100%, 0 100%);
    font-weight: bold;
}

/* command bar and status bar */
.command-dock {
    height: 27px;
}
.command-bar {
    width: 34px;
    height: 25px;
    padding-top: 5px;
    border-bottom: 1px solid #8ea6c8;
    background: linear-gradient(#f4f8fe, #dde8f6);
}
.command-bar .grip {
    display: block;
}
.statusbar {
    display: flex;
    align-items: center;
    height: 23px;
    border-top: 1px solid #7d93b3;
    background: linear-gradient(#dbe7f5 0, #c4d5ea 50%, #b5c8e0 100%);
    white-space: nowrap;
}
.command {
    flex: 1;
    padding-left: 9px;
}
.prompt {
    width: 117px;
    padding-left: 15px;
    border-left: 1px solid #8ca3c2;
}
.coords {
    width: 188px;
}
.snap {
    width: 92px;
}
.statusbar button {
    height: 19px;
    margin-right: 1px;
    padding: 0 8px;
    border: 1px solid transparent;
    border-radius: 3px;
}
.statusbar .on {
    width: 40px;
    border-color: #c59a42;
    background: linear-gradient(#fdecae, #fbd168);
}
.statusbar .smart {
    gap: 9px;
    padding-right: 6px;
}
.statusbar .resize {
    width: 12px;
    height: 12px;
    align-self: flex-end;
    fill: #8098b8;
    stroke: none;
}

/* taskbar */
.taskbar {
    display: flex;
    height: 40px;
    border-top: 1px solid #20160f;
    background: linear-gradient(to right, transparent 76%, rgba(40, 28, 20, 0.6) 79%), linear-gradient(#5e493b 0, #93775f 10px, #a98a71 100%);
}
.start {
    width: 61px;
    padding-right: 7px;
}
.start svg {
    width: 37px;
    height: 37px;
}
.tasks {
    display: flex;
    gap: 5px;
    flex: 1;
}
.task {
    width: 50px;
    height: 39px;
    border: 1px solid transparent;
    border-radius: 3px;
}
.task svg {
    width: 32px;
    height: 32px;
}
.task.wide {
    width: 52px;
}
.task.wide + .task.wide {
    margin-left: -2px;
}
.task.open {
    border-color: #d6c4b6;
    outline: 1px solid #3c2d23;
    background: linear-gradient(135deg, rgba(255, 255, 255, 0.5) 0, rgba(255, 255, 255, 0.1) 50%, rgba(255, 255, 255, 0.3) 100%);
}
.task.stack {
    border-right: 5px double #d6c4b6;
}
.task.focus {
    background: linear-gradient(135deg, #f6efe9 0, #d9c6b8 60%, #efe4dc 100%);
}
.xiami span {
    width: 32px;
    height: 32px;
    border-radius: 5px;
    background: linear-gradient(#ff9840, #ea650e);
    color: #fff;
    font-size: 24px;
    line-height: 30px;
}
.tray {
    position: relative;
    display: flex;
    align-items: flex-start;
    padding-top: 7px;
    color: #fff;
}
.lang {
    width: 22px;
    margin-top: 2px;
    font-family: "Liberation Mono", monospace;
}
.keyboard {
    width: 16px;
    height: 16px;
    margin-right: 9px;
    margin-top: 1px;
}
.lang-options {
    width: 10px;
    height: 16px;
    margin-right: 8px;
}
.notify {
    width: 100px;
    height: 16px;
    margin-top: 5px;
    margin-right: 16px;
}
.clock {
    width: 78px;
    display: flex;
    flex-direction: column;
    align-items: center;
    margin-top: -4px;
    line-height: 18px;
}
.watermark {
    position: absolute;
    left: 56px;
    top: 14px;
    color: #000;
    font-size: 14px;
    line-height: 18px;
    white-space: nowrap;
    text-shadow: -1px -1px 0 #d8d0c8;
}
.show-desktop {
    width: 14px;
    border: 1px solid #8a7868;
    background: linear-gradient(135deg, #85756a, #3c2e26);
}
```
